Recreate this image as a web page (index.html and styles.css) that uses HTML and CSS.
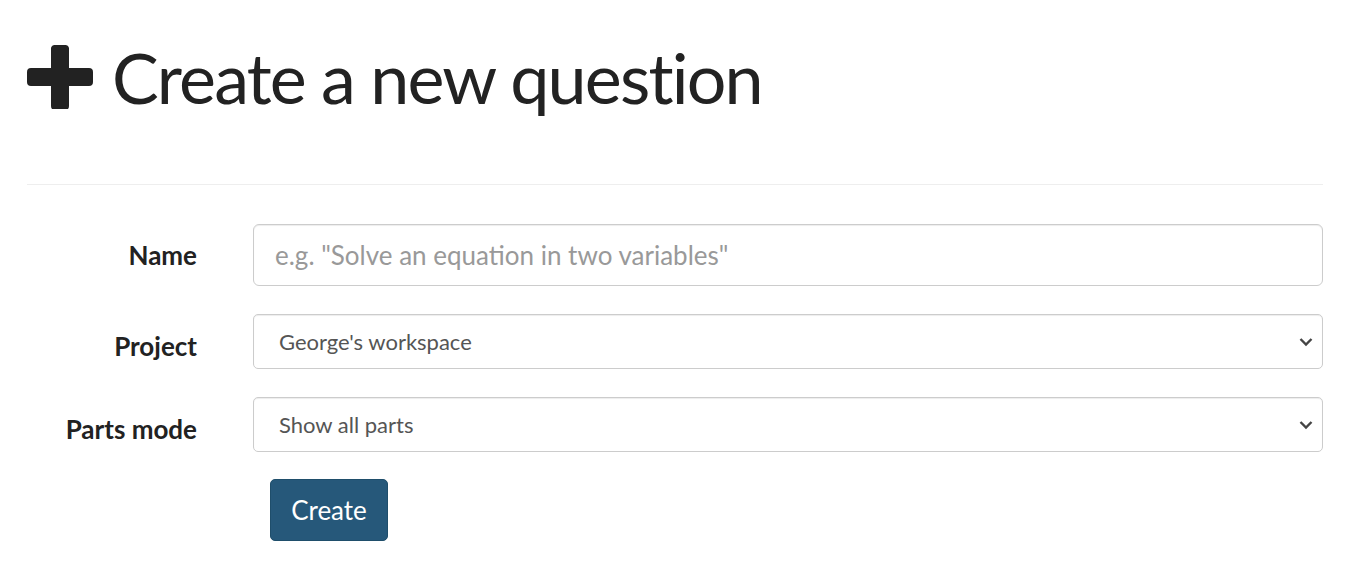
FILE: index.html
```html
<!DOCTYPE html>
<html>
<head>
<meta charset="utf-8">
<link rel="stylesheet" href="styles.css">
</head>
<body>
<div class="page">
  <h1 class="title">
    <svg class="plus" viewBox="0 0 66 64" width="66" height="64"><path d="M24 3 a4 4 0 0 1 4 -3 h10 a4 4 0 0 1 4 3 v20 h20 a4 4 0 0 1 4 4 v10 a4 4 0 0 1 -4 4 h-20 v20 a4 4 0 0 1 -4 4 h-10 a4 4 0 0 1 -4 -4 v-20 h-20 a4 4 0 0 1 -4 -4 v-10 a4 4 0 0 1 4 -4 h20 z" fill="#222"/></svg>
    <span>Create a new question</span>
  </h1>
  <hr class="rule">
  <form class="form">
    <label class="label label-name">Name</label>
    <input class="input" type="text" placeholder="e.g. &quot;Solve an equation in two variables&quot;">
    <label class="label label-select">Project</label>
    <div class="select-wrap">
      <select class="select"><option>George's workspace</option></select>
      <svg class="chev" viewBox="0 0 14 10" width="14" height="10"><path d="M1.5 2 L7 7.5 L12.5 2" fill="none" stroke="#444" stroke-width="2.4"/></svg>
    </div>
    <label class="label label-select">Parts mode</label>
    <div class="select-wrap">
      <select class="select"><option>Show all parts</option></select>
      <svg class="chev" viewBox="0 0 14 10" width="14" height="10"><path d="M1.5 2 L7 7.5 L12.5 2" fill="none" stroke="#444" stroke-width="2.4"/></svg>
    </div>
    <div></div>
    <div class="actions"><button class="btn" type="button">Create</button></div>
  </form>
</div>
</body>
</html>
```
FILE: styles.css
```css
* { box-sizing: border-box; }
body {
  margin: 0;
  background: #fff;
  color: #222;
  font-family: "Lato", "Liberation Sans", sans-serif;
}
.page {
  width: 1296px;
  margin-left: 27px;
}
.title {
  margin: 0;
  padding-top: 45px;
  display: flex;
  align-items: center;
  gap: 19px;
  font-weight: 400;
  font-size: 70px;
  letter-spacing: -1.8px;
  line-height: 64px;
  color: #222;
}
.plus { display: block; flex: none; }
.rule {
  margin: 75px 0 0 0;
  border: 0;
  border-top: 1px solid #eee;
  height: 0;
}
.form {
  margin-top: 39px;
  display: grid;
  grid-template-columns: 170px 1070px;
  column-gap: 56px;
  row-gap: 28px;
  align-items: center;
}
.label {
  text-align: right;
  font-weight: 700;
  font-size: 26px;
}
.label-select { padding-top: 8px; }
.input {
  height: 62px;
  width: 100%;
  border: 1px solid #ccc;
  border-radius: 6px;
  padding: 0 21px;
  font-family: inherit;
  font-size: 26px;
  color: #555;
  box-shadow: inset 0 1px 1px rgba(0,0,0,.075);
}
.input::placeholder { color: #999; }
.select-wrap { position: relative; }
.select {
  appearance: none;
  -webkit-appearance: none;
  display: block;
  width: 100%;
  height: 55px;
  border: 1px solid #ccc;
  border-radius: 5px;
  padding: 0 25px;
  background: #fff;
  font-family: inherit;
  font-size: 22px;
  color: #555;
  box-shadow: inset 0 1px 1px rgba(0,0,0,.075);
}
.chev {
  position: absolute;
  right: 10px;
  top: 23px;
}
.actions { padding-left: 17px; margin-top: -1px; }
.btn {
  height: 62px;
  width: 118px;
  border: 1px solid #1f4e6b;
  border-radius: 5px;
  background: #26587a;
  color: #fff;
  font-family: inherit;
  font-size: 26px;
}
```
